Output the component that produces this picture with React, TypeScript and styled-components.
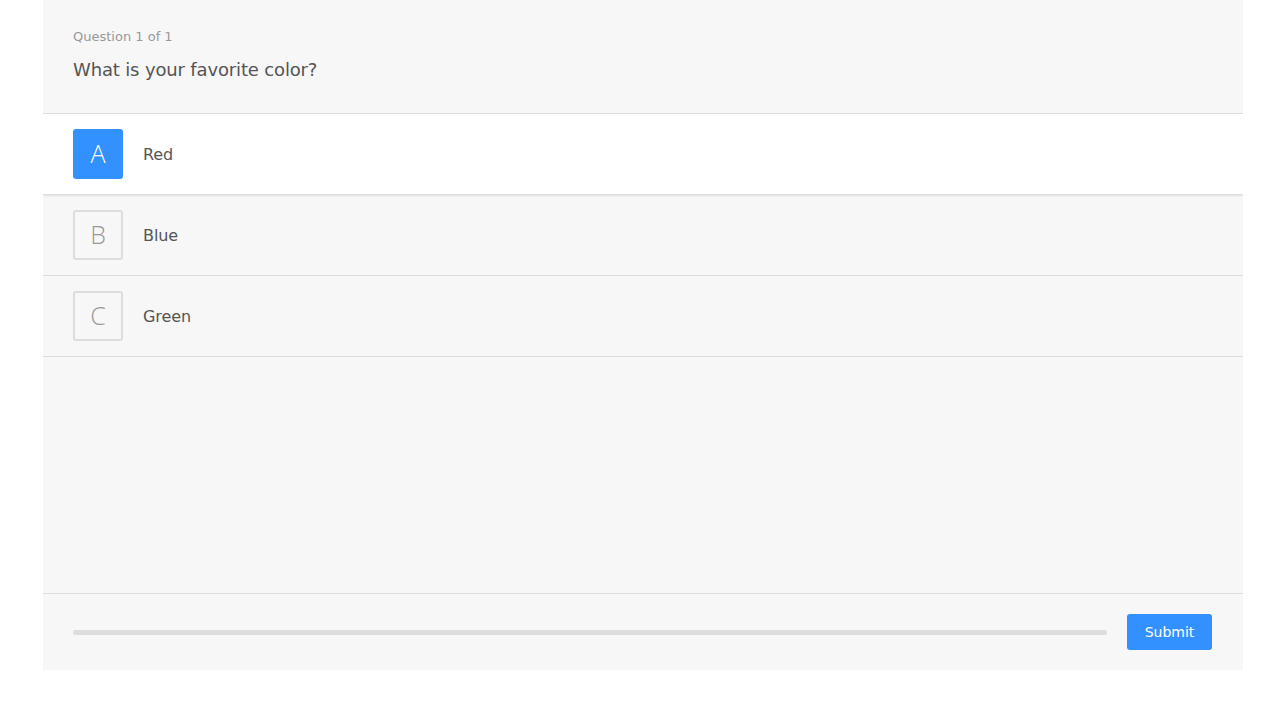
import React from "react";
import styled, { createGlobalStyle } from "styled-components";

const Global = createGlobalStyle`
  html, body { margin: 0; padding: 0; background: #ffffff; }
  body { font-family: "DejaVu Sans", "Open Sans", sans-serif; }
`;

const Page = styled.div`
  padding: 0 45px 0 43px;
`;

const Quiz = styled.div`
  width: 1200px;
  height: 670px;
  background: #f7f7f7;
  display: flex;
  flex-direction: column;
`;

const Header = styled.div`
  padding: 27px 30px 30px;
  border-bottom: 1px solid #dddddd;
  display: flex;
  flex-direction: column;
  gap: 10px;
`;

const Counter = styled.div`
  font-size: 13px;
  line-height: 20px;
  color: #999999;
`;

const Title = styled.div`
  font-size: 18px;
  line-height: 26px;
  color: #555555;
  letter-spacing: -0.15px;
`;

const Options = styled.div`
  display: flex;
  flex-direction: column;
`;

const Option = styled.div<{ $selected?: boolean }>`
  display: flex;
  align-items: center;
  gap: 20px;
  padding: 15px 30px;
  border-bottom: 1px solid #dddddd;
  background: ${(p) => (p.$selected ? "#ffffff" : "transparent")};
  box-shadow: ${(p) => (p.$selected ? "0 2px 2px -1px rgba(0,0,0,0.1)" : "none")};
  position: relative;
  cursor: pointer;
`;

const Letter = styled.div<{ $selected?: boolean }>`
  width: 50px;
  height: 50px;
  box-sizing: border-box;
  border-radius: 3px;
  display: flex;
  align-items: center;
  justify-content: center;
  font-size: 25px;
  line-height: 1;
  font-weight: 300;
  font-family: "Open Sans", "DejaVu Sans", sans-serif;
  background: ${(p) => (p.$selected ? "#3391ff" : "transparent")};
  color: ${(p) => (p.$selected ? "#ffffff" : "#999999")};
  border: ${(p) => (p.$selected ? "none" : "2px solid #dddddd")};
  padding-bottom: 2px;
`;

const Label = styled.div`
  font-size: 16px;
  color: #555555;
  letter-spacing: -0.1px;
`;

const Spacer = styled.div`
  flex: 1;
`;

const Footer = styled.div`
  border-top: 1px solid #dddddd;
  padding: 20px 31px 20px 30px;
  display: flex;
  align-items: center;
  gap: 20px;
`;

const Progress = styled.div`
  flex: 1;
  height: 5px;
  border-radius: 3px;
  background: #dddddd;
`;

const Submit = styled.button`
  width: 85px;
  height: 36px;
  border: none;
  border-radius: 3px;
  background: #3391ff;
  color: #ffffff;
  font-family: "DejaVu Sans", sans-serif;
  font-size: 14px;
  cursor: pointer;
`;

const options = [
  { key: "A", label: "Red", selected: true },
  { key: "B", label: "Blue" },
  { key: "C", label: "Green" },
];

export default function App() {
  return (
    <>
      <Global />
      <Page>
        <Quiz>
          <Header>
            <Counter>Question 1 of 1</Counter>
            <Title>What is your favorite color?</Title>
          </Header>
          <Options>
            {options.map((o) => (
              <Option key={o.key} $selected={o.selected}>
                <Letter $selected={o.selected}>{o.key}</Letter>
                <Label>{o.label}</Label>
              </Option>
            ))}
          </Options>
          <Spacer />
          <Footer>
            <Progress />
            <Submit>Submit</Submit>
          </Footer>
        </Quiz>
      </Page>
    </>
  );
}
